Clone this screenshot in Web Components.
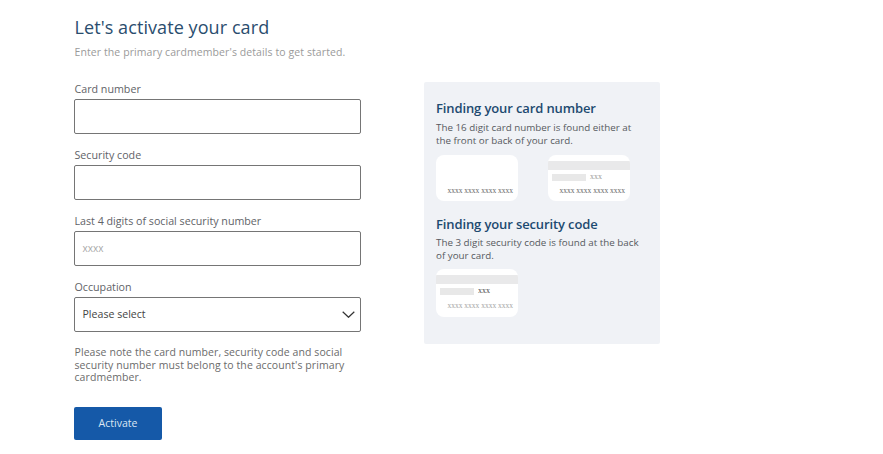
<!DOCTYPE html>
<html><head><meta charset="utf-8"><style>
html,body{margin:0;padding:0;background:#fff;overflow:hidden}
body{font-family:"Open Sans",sans-serif;width:883px;height:454px}
</style></head><body>
<activate-page>
  <activate-form slot="form"></activate-form>
  <help-panel slot="help"></help-panel>
</activate-page>
<script>
function def(name, html){
  customElements.define(name, class extends HTMLElement{
    constructor(){super();this.attachShadow({mode:'open'}).innerHTML=typeof html==='function'?html(this):html;}
  });
}
def('activate-page',`<style>:host{display:flex;padding:15px 0 0 74px;gap:63px;align-items:flex-start}
::slotted([slot=help]){margin-top:67px}</style><slot name="form"></slot><slot name="help"></slot>`);
def('form-field',el=>`<style>:host{display:block;margin-bottom:13px}
.l{display:block;font-size:10.7px;line-height:15px;color:#5f6368;margin-bottom:3px;height:15px;padding:1px 0 0 .5px;box-sizing:border-box}
.b{box-sizing:border-box;height:35px;border:1px solid #757575;border-radius:2px;background:#fff;display:flex;align-items:center;padding:0 7px 1.5px 7.5px;font-size:10.6px}
.p{font-size:10px;color:#a9a9a9}.v{color:#444}
svg{margin-left:auto;margin-right:-2px;margin-top:1.5px}</style>
<span class="l">${el.getAttribute('label')}</span>
<div class="b">${el.hasAttribute('placeholder')?`<span class="p">${el.getAttribute('placeholder')}</span>`:''}${el.hasAttribute('value')?`<span class="v">${el.getAttribute('value')}</span><svg width="13" height="7" viewBox="0 0 13 7"><path d="M.7.7l5.8 5.6L12.3.7" fill="none" stroke="#333" stroke-width="1.2"/></svg>`:''}</div>`);
def('activate-form',`<style>:host{display:block;width:287px}
h1{margin:0;padding-left:.5px;font-weight:400;font-size:18px;line-height:24px;color:#2a4d6e;letter-spacing:.08px}
.s{margin:6px 0 22px;padding-left:.5px;font-size:10.5px;line-height:14px;color:#9a9a9a;letter-spacing:.09px}
.n{margin:14px 0 23px;padding-left:.5px;font-size:10.5px;line-height:12.5px;color:#6b6b6b;width:280px;letter-spacing:.08px}
button{display:block;box-sizing:border-box;width:88px;height:33px;border:0;border-radius:2px;background:#1559a8;color:#dbe6f3;font:10.5px "Open Sans",sans-serif;padding:0}
</style>
<h1>Let's activate your card</h1>
<p class="s">Enter the primary cardmember's details to get started.</p>
<form-field label="Card number"></form-field>
<form-field label="Security code"></form-field>
<form-field label="Last 4 digits of social security number" placeholder="xxxx"></form-field>
<form-field label="Occupation" value="Please select" style="margin-bottom:0"></form-field>
<p class="n">Please note the card number, security code and social security number must belong to the account's primary cardmember.</p>
<button>Activate</button>`);
def('card-sketch',el=>{
 const back=el.hasAttribute('back'), dark=el.getAttribute('tone')!=='light';
 return `<style>:host{box-sizing:border-box;width:82px;height:46px;background:#fff;border-radius:8px;overflow:hidden;display:flex;flex-direction:column}
:host([tone=light]){height:48px}
:host([tone=light]) .num{margin-bottom:7px}
.st{background:#e9e9ea;flex:none;margin-top:6px;height:9px}
.m{display:flex;align-items:center;gap:4px;margin:4px 0 0 4px;height:7px;flex:none}
.sg{width:34px;height:7px;background:#e8e8e8}
.x{font-size:8px;line-height:7px;color:#8a8a8a;font-family:"Liberation Serif",serif;margin-top:-3px}
.num{margin-top:auto;margin-bottom:6px;text-align:right;padding-right:5px;font-family:"Liberation Serif",serif;font-size:7.5px;line-height:9px;color:${dark?'#666':'#a5a5a5'};white-space:nowrap}
</style>${back?`<div class="st"></div><div class="m"><div class="sg"></div><span class="x" style="color:${el.getAttribute('code')||'#9a9a9a'}">xxx</span></div>`:''}<div class="num">xxxx xxxx xxxx xxxx</div>`});
def('help-panel',`<style>:host{display:block;box-sizing:border-box;width:236px;height:262px;background:#f0f2f6;border-radius:2px;padding:17px 16px 0 12px}
h2{margin:0;font-size:13px;line-height:18px;font-weight:600;color:#1d4a70;letter-spacing:-.12px}
p{margin:5px 0 8px;font-size:9.8px;line-height:12.5px;color:#56595e}
.c{display:flex;gap:30px}
.sec2{margin-top:14px}
.sec2 + p{margin:4px 0 7px}
</style>
<h2>Finding your card number</h2>
<p>The 16 digit card number is found either at the front or back of your card.</p>
<div class="c"><card-sketch></card-sketch><card-sketch back></card-sketch></div>
<h2 class="sec2">Finding your security code</h2>
<p>The 3 digit security code is found at the back of your card.</p>
<div class="c"><card-sketch back tone="light" code="#444"></card-sketch></div>`);
</script>
</body></html>
